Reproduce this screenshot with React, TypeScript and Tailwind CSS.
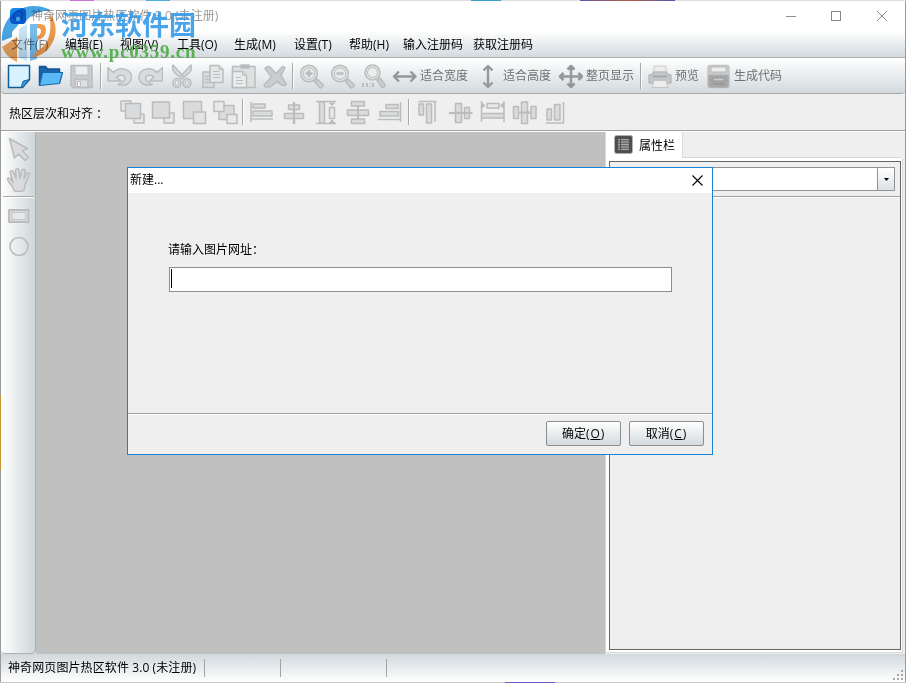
import type { ReactNode } from "react";

const menuItems = [
  { label: "文件(F)", width: "w-[54px]", faded: true },
  { label: "编辑(E)", width: "w-[55px]" },
  { label: "视图(V)", width: "w-[57px]" },
  { label: "工具(O)", width: "w-[57px]" },
  { label: "生成(M)", width: "w-[60px]" },
  { label: "设置(T)", width: "w-[55px]" },
  { label: "帮助(H)", width: "w-[54px]" },
  { label: "输入注册码", width: "w-[70px]" },
  { label: "获取注册码", width: "w-[70px]" },
];

function Icon({ children, wide = false }: { children: ReactNode; wide?: boolean }) {
  return (
    <button className={`flex h-7 shrink-0 items-center justify-center ${wide ? "w-8" : "w-[31px]"}`}>
      <svg
        width="25"
        height="25"
        viewBox="0 0 25 25"
        fill="#dadbdc"
        stroke="#bbbcbd"
        strokeWidth="1.5"
        strokeLinejoin="round"
      >
        {children}
      </svg>
    </button>
  );
}

function Separator({ className }: { className: string }) {
  return (
    <div className={`flex shrink-0 justify-center ${className}`}>
      <div className="h-[26px] w-0.5 border-r border-l border-r-white border-l-[#a6a6a6]" />
    </div>
  );
}

function ToolLabel({ text, className = "w-[52px]" }: { text: string; className?: string }) {
  return <span className={`shrink-0 whitespace-nowrap text-[#707070] ${className}`}>{text}</span>;
}

function Magnifier({ children }: { children?: ReactNode }) {
  return (
    <Icon>
      <path d="M15.500 17.500l2.500-2.500 6 5.500q.5 3-3 3.500z" fill="#cfcfcf" />
      <circle cx="10" cy="9.500" r="8.300" fill="#e3e4e5" />
      <circle cx="10" cy="9.500" r="5.800" fill="#e7e8e9" strokeWidth="1" />
      {children}
    </Icon>
  );
}

function TitleBar() {
  return (
    <div className="flex h-[30px] shrink-0 items-center bg-white pl-[9px]">
      <svg width="16" height="16" viewBox="0 0 16 16">
        <rect width="16" height="16" rx="4" fill="#1688e5" />
        <circle cx="8" cy="7.500" r="4.500" fill="none" stroke="#0968b5" strokeWidth="1.500" />
        <circle cx="8" cy="11" r="2.200" fill="#fff" />
      </svg>
      <span className="ml-[5px] text-[12px] tracking-[0.06px] text-[#999]">神奇网页图片热区软件 3.0 (未注册)</span>
      <svg className="mr-[13px] mb-px ml-auto" width="110" height="14" viewBox="0 0 110 14" fill="none" stroke="#8c8c8c">
        <path d="M4 7.500h10" />
        <rect x="49.500" y="2.500" width="9" height="9" />
        <path d="M95 2l10 10M105 2l-10 10" />
      </svg>
    </div>
  );
}

function MenuBar() {
  return (
    <div className="flex h-[27px] shrink-0 items-center border-b border-[#adb1b3] bg-linear-to-b from-white to-[#d3dade] pt-0.5 pl-[10px] text-black">
      {menuItems.map((item) => (
        <span
          key={item.label}
          className={`shrink-0 whitespace-nowrap ${item.width} ${item.faded ? "text-[#777b7d]" : ""}`}
        >
          {item.label}
        </span>
      ))}
    </div>
  );
}

function MainToolbar() {
  return (
    <div className="flex h-9 shrink-0 items-center rounded-b-sm border-b border-[#a5a9ab] bg-linear-to-b from-white to-[#d3dade] pt-px pl-[3px]">
      <Icon>
        <path d="M1.500 1.500h21v14l-7 8h-14z" fill="#d8f3ff" stroke="#125d98" />
        <path d="M22.500 15.500l-7 8-1-1.500 1.800-5z" fill="#3e9cd8" stroke="#125d98" strokeWidth="1" />
      </Icon>
      <Icon>
        <path d="M1.500 21.500V2.500h6l2 2.500h12v6" fill="#1b65ab" stroke="#15548f" />
        <path d="M1.500 21.500l3-13h20l-3 11z" fill="#5abaf6" stroke="#1765ac" strokeWidth="1.200" />
      </Icon>
      <Icon>
        <path d="M2 1.500h21v22H4l-2-2z" fill="#c9cbcd" />
        <path d="M6 2h13v9H6z" fill="#eceeef" strokeWidth="1" />
        <path d="M6 15.500h13v8H6z" fill="#dedfe0" />
        <path d="M8.500 17.500h3v5h-3z" fill="#f3f3f3" strokeWidth="1" />
      </Icon>
      <Separator className="w-[7px]" />
      <Icon>
        <path d="M1 3.500v13.500h13L9.500 13c3.500-3 8-2 8.500 1 .3 3-3 5-7 6.500 7 2 13-1 13.500-7 .3-8-11-12-18-5z" />
      </Icon>
      <Icon>
        <path d="M24.500 3.500v13.500h-13L16 13c-3.500-3-8-2-8.500 1-.3 3 3 5 7 6.500-7 2-13-1-13.500-7-.3-8 11-12 18-5z" />
      </Icon>
      <Icon>
        <path d="M4 1c-1 3 0 6 2 8l7 6 2-2zM22 1c1 3 0 6-2 8l-7 6-2-2z" />
        <ellipse cx="8" cy="19" rx="4" ry="4.500" />
        <ellipse cx="18" cy="19" rx="4" ry="4.500" />
        <ellipse cx="8" cy="19" rx="1.800" ry="2.300" fill="#eee" strokeWidth="1" />
        <ellipse cx="18" cy="19" rx="1.800" ry="2.300" fill="#eee" strokeWidth="1" />
      </Icon>
      <Icon>
        <path d="M3 8h11v15.500H3z" />
        <path d="M5 12.500h4M5 15.500h4M5 18.500h4" />
        <path d="M10 1.500h9l4 4v13H10z" fill="#e6e7e8" />
        <path d="M19 1.500v4h4M13 7.500h6M13 10.500h7M13 13.500h7" strokeWidth="1" />
      </Icon>
      <Icon>
        <path d="M1.500 2.500h22.500v21h-22.500z" fill="#dfe0e2" />
        <path d="M10 1h8v3h-8z" fill="#b9b9b9" />
        <path d="M1.500 7.500h10l4 4v12h-14z" fill="#ebecec" />
        <path d="M11.500 7.500v4h4M5 13.500h5M5 16.500h7M5 19.500h7" strokeWidth="1" />
      </Icon>
      <Icon>
        <path d="M3 4.500q4-5 8 2l3 3 6-6.500q2-1 3 1l-4 7.500 5.500 9q-4 3-9-3l-7.500 5.500-5 0-1-2 7.500-8z" fill="#cbccce" />
      </Icon>
      <Separator className="w-[6px]" />
      <Magnifier>
        <path d="M10 6v7M6.500 9.500h7" strokeWidth="2.500" />
      </Magnifier>
      <Magnifier>
        <path d="M6.500 9.500h7" strokeWidth="2.500" />
      </Magnifier>
      <Icon>
        <path d="M16 16l3-2 5 6.500q0 3-3 3z" fill="#cfcfcf" />
        <circle cx="11.500" cy="8.500" r="7.500" fill="#e1e2e3" />
        <circle cx="11.500" cy="8.500" r="5" fill="#eceded" strokeWidth="1" />
        <path d="M2 19v4M6 19v4M9 19.500v.5M9 22v1M12 19v4" strokeWidth="2" />
      </Icon>
      <Icon>
        <path d="M2 12.500h21.500M7 7.500l-5 5 5 5M18.500 7.500l5 5-5 5" fill="none" stroke="#969798" strokeWidth="2.400" />
      </Icon>
      <ToolLabel text="适合宽度" />
      <Icon>
        <path d="M13 2v21M8.500 6.500L13 2l4.500 4.500M8.500 18.500L13 23l4.500-4.500" fill="none" stroke="#969798" strokeWidth="2.400" />
      </Icon>
      <ToolLabel text="适合高度" />
      <Icon>
        <path
          d="M13 2v21M2 12.500h22M9.500 5.500L13 2l3.500 3.500M9.500 19.500L13 23l3.500-3.500M5.500 9L2 12.500 5.500 16M20.500 9l3.500 3.500-3.500 3.500"
          fill="none"
          stroke="#969798"
          strokeWidth="2.500"
        />
      </Icon>
      <ToolLabel text="整页显示" />
      <Separator className="w-[6px]" />
      <Icon>
        <path d="M7 2h12v9H7z" fill="#eee" stroke="#ccc" strokeWidth="1" />
        <path d="M2 11l4-1v-2h14v2l4 1v8H2z" fill="#c3c5c6" stroke="#bcbdbe" />
        <path d="M6 12.500h14" stroke="#a3a3a3" />
        <path d="M7 16.500h12l2 7H5z" fill="#ededed" stroke="#c5c5c5" strokeWidth="1" />
      </Icon>
      <ToolLabel text="预览" className="w-7" />
      <Icon>
        <path d="M4 1.500h17q2 0 2 3v17q0 2-2 2H4q-2 0-2-2v-17q0-3 2-3z" fill="#c7c8c9" stroke="#c3c4c5" />
        <path d="M5 3h15v5H5z" fill="#ececec" strokeWidth="1" />
        <path d="M3 11.500h19v9.500q0 2-2 2H5q-2 0-2-2z" fill="#a5a5a5" stroke="#ababab" />
        <path d="M7 14h11v3H7z" fill="#c8c8c8" stroke="#999" strokeWidth="1" />
        <path d="M8 20h10" stroke="#8d8d8d" strokeWidth="1" />
      </Icon>
      <ToolLabel text="生成代码" />
    </div>
  );
}

function AlignToolbar() {
  return (
    <div className="flex h-[37px] shrink-0 items-center border-b border-[#a0a0a0] bg-[#efefef] pl-2">
      <span className="flex w-[108px] shrink-0 pt-1 whitespace-nowrap text-black">
        热区层次和对齐<span className="font-['Noto_Sans_CJK_TC',sans-serif]">：</span>
      </span>
      <Icon>
        <path d="M1 1h10v10H1z" fill="#e7e7e7" />
        <path d="M14 14h10v9H14z" fill="#e7e7e7" />
        <path d="M5.500 3.500h15v15h-15z" />
      </Icon>
      <Icon>
        <path d="M13 13h10v10H13z" fill="#e7e7e7" />
        <path d="M1.500 2h17v16h-17z" />
      </Icon>
      <Icon>
        <path d="M1.500 1.500h18v17h-18z" />
        <path d="M11.500 12h12v11.500h-12z" fill="#e3e3e3" />
      </Icon>
      <Icon>
        <path d="M6 5.500h15v14H6z" />
        <path d="M1 1.500h10v10H1zM14 14.500h10v9H14z" fill="#e9e9e9" />
      </Icon>
      <Separator className="w-1" />
      <Icon wide>
        <path d="M2 2v20M4 4h12v4H4zM4 11h19v5H4z" />
        <path d="M2 19h22" />
      </Icon>
      <Icon wide>
        <path d="M13 2v22" strokeWidth="2.500" />
        <path d="M7.500 5h11v4.500h-11zM3.500 13.500h19v5h-19z" />
        <path d="M13 5v14" strokeWidth="2" />
      </Icon>
      <Icon wide>
        <path d="M3 1.500h20M3 23.500h20M6.500 2h5v21h-5z" />
        <path d="M16.500 7.500h5v11h-5z" fill="#e9e9e9" />
        <path d="M16.500 3h5L19 5.500zM16.500 22.500h5L19 20z" fill="#bbbcbd" strokeWidth="1" />
      </Icon>
      <Icon wide>
        <path d="M13 2v21" strokeWidth="2" />
        <path d="M6.500 1.500h13v4.500h-13zM2.500 10h21v5.500h-21zM6.500 19h13v4.500h-13z" />
        <path d="M13 9v8" strokeWidth="2" />
      </Icon>
      <Icon wide>
        <path d="M23.500 2v20M9 4.500h12v4H9zM3 11.500h18.500V16H3z" />
        <path d="M1 19.500h23" />
      </Icon>
      <Separator className="w-[7px]" />
      <Icon wide>
        <path d="M2.500 1.500h18M3 4h4.500v11H3zM10.500 4h5v19h-5zM19 2v20" />
      </Icon>
      <Icon wide>
        <path d="M7.500 3.500h6v19h-6zM16.500 7.500h5v11h-5z" />
        <path d="M1 13h23.500" strokeWidth="2.200" />
      </Icon>
      <Icon wide>
        <path d="M1.500 1v21M24 1v21M1.500 13.500h22.500v4.500H1.500z" />
        <path d="M7 3.500h12v4.500H7z" fill="#e9e9e9" />
        <path d="M2 3v5l3-2.500zM23.500 3v5l-3-2.500z" fill="#bbbcbd" strokeWidth="1" />
      </Icon>
      <Icon wide>
        <path d="M1 12.500h23" strokeWidth="2" />
        <path d="M1.500 6.500h5v12h-5zM9.500 2h6v21.500h-6zM19 6.500h5v12h-5z" />
        <path d="M8 12.500h9" strokeWidth="2" />
      </Icon>
      <Icon wide>
        <path d="M2 23h18M3 9h4.500v11H3zM10.500 4.500h5.500V20h-5.500zM19.500 2v21" />
      </Icon>
    </div>
  );
}

function SideTools() {
  return (
    <div className="flex w-[35px] shrink-0 flex-col items-center rounded-b-sm border-r border-b border-[#abb0b3] bg-linear-to-r from-white to-[#ced6da] pt-[3px]">
      <Icon>
        <path d="M3.500 1.500l18 10-5 2.500 6 6.500-3.500 3-6.500-6.500-4 4z" />
      </Icon>
      <div className="pt-0.5">
        <Icon>
          <path d="M8 23.500c-1-6-7-8-6.500-12 2-2 4 2 5.500 4L4 5q2-3 4 1l2 5-.5-8q2-3 3.500 0l1 8 2-8q3-2 3 1l-1 8 3-6q3-1 2 2c-1 4-3 7-4 9l-1 6.500q-5 2-10 0z" />
        </Icon>
      </div>
      <div className="mt-[3px] h-0.5 w-[31px] border-t border-b border-t-[#aaa] border-b-white" />
      <div className="pt-[3px]">
        <Icon>
          <path d="M3 7h19.500v12H3z" strokeWidth="1.800" />
          <path d="M6 9.500h13.500v7H6z" fill="#e6e9eb" strokeWidth="0.700" />
        </Icon>
      </div>
      <div className="pt-[3px]">
        <Icon>
          <circle cx="13" cy="12.500" r="9" fill="none" strokeWidth="1.600" />
        </Icon>
      </div>
    </div>
  );
}

function PropertiesPanel() {
  return (
    <div className="flex w-[300px] shrink-0 flex-col bg-[#efefef]">
      <div className="flex h-[26px] shrink-0">
        <div className="flex w-[78px] items-center border-r border-l border-[#dcdcdc] bg-white pb-px pl-2">
          <svg width="19" height="19" viewBox="0 0 19 19">
            <rect x="0.500" y="0.500" width="18" height="18" rx="2" fill="#4f4f4f" stroke="#b0b0b0" />
            <rect x="4" y="4" width="11" height="11" fill="#6d6d6d" />
            <path d="M4 4.500h11M4 7h11M4 9.500h11M4 12h11M4 14.500h11" stroke="#aaa" />
            <path d="M6.500 4v11" stroke="#4f4f4f" />
          </svg>
          <span className="mt-0.5 ml-1.5 text-black">属性栏</span>
        </div>
        <div className="mr-1 flex-1 border-b border-[#d8d8d8]" />
      </div>
      <div className="mr-0.5 mb-px flex flex-1 border-r border-b border-l border-[#d8d8d8] bg-white pt-[3px] pr-px pb-[2px] pl-[3px]">
        <div className="flex flex-1 flex-col border border-[#666] bg-[#efefef]">
          <div className="flex h-[35px] shrink-0 items-start border-b border-[#a0a0a0] pt-[5px] pr-[5px] pl-[5px]">
            <div className="flex h-6 flex-1 border border-[#929292] bg-white">
              <div className="flex-1" />
              <div className="flex w-[17px] items-center justify-center border-l border-[#929292] bg-linear-to-b from-white to-[#dce2e5]">
                <svg width="5" height="3" viewBox="0 0 5 3">
                  <path d="M0 0h5L2.500 3z" />
                </svg>
              </div>
            </div>
          </div>
          <div className="h-px bg-white" />
        </div>
      </div>
    </div>
  );
}

function StatusBar() {
  return (
    <div className="flex h-7 shrink-0 items-center bg-linear-to-b from-[#d1d8dc] to-white pl-[7px] text-black">
      <span className="w-[196px] shrink-0 tracking-[0.1px] whitespace-nowrap">神奇网页图片热区软件 3.0 (未注册)</span>
      <div className="h-[18px] w-[76px] border-l border-[#a4a4a4]" />
      <div className="h-[18px] w-[106px] border-l border-[#a4a4a4]" />
      <div className="h-[18px] border-l border-[#a4a4a4]" />
      <svg className="mr-0.5 mb-0.5 ml-auto self-end" width="10" height="10" viewBox="0 0 10 10" fill="#a7a7a7">
        <path d="M8 0h2v2H8zM4 4h2v2H4zM8 4h2v2H8zM0 8h2v2H0zM4 8h2v2H4zM8 8h2v2H8z" />
      </svg>
    </div>
  );
}

function NewDialog() {
  return (
    <div className="absolute top-[167px] left-[127px] flex h-72 w-[586px] flex-col border border-[#1883d7] bg-[#efefef] text-black">
      <div className="flex h-[25px] shrink-0 items-center justify-between bg-white pr-[9px] pb-px pl-0.5">
        <span>新建...</span>
        <svg width="11" height="11" viewBox="0 0 11 11" stroke="#000" strokeWidth="1.100">
          <path d="M0.500 0.500l10 10M10.500 0.500l-10 10" />
        </svg>
      </div>
      <div className="flex-1 border-b border-[#a0a0a0] pt-12 pr-10 pl-10">
        <p className="h-[18px] leading-[18px]">请输入图片网址：</p>
        <div className="mt-2 ml-px h-[25px] w-[503px] border border-[#8e8e8e] bg-white pt-px pl-px">
          <div className="h-[19px] w-px bg-black" />
        </div>
      </div>
      <div className="flex h-10 shrink-0 justify-end gap-2 border-t border-white pt-1.5 pr-2">
        <button className="h-[25px] w-[75px] rounded-xs border border-[#8e8e8e] bg-linear-to-b from-white to-[#d3dade] pt-px">
          确定<span className="tracking-[0.9px]">(<u>O</u>)</span>
        </button>
        <button className="h-[25px] w-[75px] rounded-xs border border-[#8e8e8e] bg-linear-to-b from-white to-[#d3dade] pt-px">
          取消<span className="tracking-[0.9px]">(<u>C</u>)</span>
        </button>
      </div>
    </div>
  );
}

function Watermark() {
  return (
    <div className="pointer-events-none absolute top-1 left-0 flex">
      <svg className="mix-blend-multiply" width="60" height="60" viewBox="0 0 60 60">
        <path d="M2 37C1 18 14 3 33 2q12 0 18 5C40 6 30 11 24 20h-5l-7 8v5z" fill="#48a5e3" />
        <path d="M19 25l8-5v37l-8-3z" fill="#48a5e3" opacity="0.3" />
        <path d="M30 20h7V55l-7 2z" fill="#48a5e3" opacity="0.75" />
        <path
          d="M49 9c8 9 9 22 2 32-4 7-11 11-19 13l5-7c8-4 12-11 13-20 1-7 0-12-1-18z"
          fill="#ef9a4c"
        />
        <path d="M37 20h3q6 0 6 6 0 8-9 10v-4q4-1 4-5 0-3-4-3z" fill="#ef9a4c" />
        <path d="M2 43l15-10v25Q6 53 2 43z" fill="#ef9a4c" opacity="0.9" />
      </svg>
      <div className="ml-px whitespace-nowrap">
        <div className="mt-1.5 h-[29px] text-[27px] leading-[29px] font-bold text-[#369be8] opacity-90">河东软件园</div>
        <div className="mt-[3px] h-5 font-['Liberation_Serif',serif] text-[19px] leading-5 font-bold tracking-[0.75px] text-[#4cac43] opacity-90">
          www.pc0359.cn
        </div>
      </div>
    </div>
  );
}

export default function App() {
  return (
    <div className="relative flex h-[683px] w-[906px] flex-col overflow-hidden bg-[#efefef] font-['Open_Sans','Noto_Sans_CJK_SC',sans-serif] text-[12px]">
      <div className="flex h-px shrink-0 bg-[#dedede]">
        <div className="ml-[70px] w-6 bg-[#ca70d8]" />
        <div className="ml-[52px] w-6 bg-[#4aafe0]" />
        <div className="ml-[301px] w-[30px] bg-[#3f9ed0]" />
        <div className="ml-[79px] w-[95px] bg-linear-to-r from-[#6150a8] via-[#b65b3d] to-[#5250b0]" />
      </div>
      <div className="flex min-h-0 flex-1 border-r border-[#999]">
        <div className="flex w-px shrink-0 flex-col bg-[#999] pt-[394px]">
          <div className="h-[75px] bg-[#c39435]" />
        </div>
        <div className="flex min-w-0 flex-1 flex-col">
          <TitleBar />
          <MenuBar />
          <MainToolbar />
          <AlignToolbar />
          <div className="flex min-h-0 flex-1 border-t border-white">
            <SideTools />
            <div className="flex-1 bg-[#c0c0c0]" />
            <PropertiesPanel />
          </div>
          <StatusBar />
        </div>
      </div>
      <div className="flex h-px shrink-0 bg-[#c8c8c8]">
        <div className="ml-[505px] w-[50px] bg-[#7658c8]" />
      </div>
      <NewDialog />
      <Watermark />
    </div>
  );
}
